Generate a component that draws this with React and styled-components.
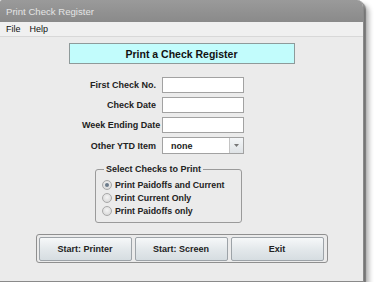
import React from 'react'
import styled, { createGlobalStyle } from 'styled-components'

const GlobalStyle = createGlobalStyle`
  body {
    margin: 0;
    background: #ffffff;
    font-family: "Liberation Sans", Arial, sans-serif;
  }
`

const Window = styled.div`
  width: 364px;
  height: 282px;
  display: flex;
  flex-direction: column;
  background: #ebebeb;
  border-radius: 2px 7px 0 0;
  box-shadow: 2px 2px 1px rgba(0, 0, 0, 0.35), 5px 5px 5px rgba(0, 0, 0, 0.3);
  border-right: 1px solid #8a8a8a;
  border-bottom: 1px solid #8a8a8a;
  box-sizing: border-box;
  overflow: hidden;
`

const TitleBar = styled.div`
  height: 22px;
  flex: none;
  display: flex;
  align-items: center;
  padding-left: 6px;
  background: linear-gradient(#9a9a9a, #8a8a8a);
  color: #e4e4e4;
  font-size: 9.6px;
`

const MenuBar = styled.div`
  height: 14px;
  flex: none;
  display: flex;
  align-items: center;
  gap: 9px;
  padding-left: 6px;
  background: #f0f0f0;
  border-bottom: 1px solid #d8d8d8;
  font-size: 9px;
  color: #111;
`

const Body = styled.div`
  flex: 1;
  display: flex;
  flex-direction: column;
`

const Heading = styled.div`
  align-self: center;
  margin-top: 6px;
  width: 224px;
  height: 19px;
  display: flex;
  align-items: center;
  justify-content: center;
  background: #c2fcfc;
  border: 1px solid #8e9a9a;
  font-size: 10.5px;
  font-weight: bold;
  color: #111;
`

const Form = styled.div`
  margin: 13px 0 0 82px;
  display: grid;
  grid-template-columns: 74px 82px;
  column-gap: 6px;
  row-gap: 4px;
  align-items: center;
`

const Label = styled.div`
  text-align: right;
  font-size: 9px;
  font-weight: bold;
  color: #222;
  white-space: nowrap;
`

const Field = styled.div`
  height: 14px;
  background: #fff;
  border: 1px solid #a2a2a2;
`

const Select = styled.div`
  height: 15px;
  display: flex;
  background: #fff;
  border: 1px solid #a2a2a2;
  font-size: 9px;
  font-weight: bold;
  color: #222;
`

const SelectValue = styled.div`
  flex: 1;
  display: flex;
  align-items: center;
  padding-left: 8px;
`

const SelectButton = styled.div`
  width: 13px;
  display: flex;
  align-items: center;
  justify-content: center;
  border-left: 1px solid #c4c4c4;
  background: linear-gradient(#f4f6f8, #dfe3e6);
`

const Group = styled.fieldset`
  margin: 10px 0 0 95px;
  width: 147px;
  height: 59px;
  padding: 6px 0 0 6px;
  box-sizing: border-box;
  border: 1px solid #9a9a9a;
  border-radius: 3px;
  display: flex;
  flex-direction: column;
  gap: 3px;
`

const Legend = styled.legend`
  padding: 0 2px;
  margin-left: 2px;
  font-size: 9px;
  font-weight: bold;
  color: #222;
`

const Option = styled.div`
  display: flex;
  align-items: center;
  gap: 3px;
  height: 10px;
  font-size: 8.8px;
  font-weight: bold;
  color: #222;
`

const Radio = styled.span`
  width: 8px;
  height: 8px;
  border-radius: 50%;
  border: 1px solid #a8a8a8;
  background: radial-gradient(circle at 50% 40%, #f4f4f4, #d2d2d2);
  display: flex;
  align-items: center;
  justify-content: center;

  &::after {
    content: '';
    width: 4px;
    height: 4px;
    border-radius: 50%;
    background: ${p => (p.checked ? '#6b7a8a' : 'transparent')};
  }
`

const ButtonPanel = styled.div`
  align-self: center;
  margin-top: 11px;
  width: 292px;
  height: 29px;
  box-sizing: border-box;
  padding: 2px 3px 0 2px;
  border: 1px solid #8f8f8f;
  border-radius: 3px;
  display: flex;
  gap: 3px;
`

const Button = styled.div`
  flex: 1;
  height: 22px;
  display: flex;
  align-items: center;
  justify-content: center;
  border: 1px solid #9da3a8;
  border-radius: 2px;
  background: linear-gradient(#f6f8f9, #e2e7ea 55%, #d6dde1);
  font-size: 9px;
  font-weight: bold;
  color: #222;
`

const Arrow = () => (
  <svg width="5" height="3" viewBox="0 0 5 3">
    <path d="M0 0 L5 0 L2.5 3 Z" fill="#777" />
  </svg>
)

const fields = ['First Check No.', 'Check Date', 'Week Ending Date']
const options = ['Print Paidoffs and Current', 'Print Current Only', 'Print Paidoffs only']

export default function App() {
  return (
    <>
      <GlobalStyle />
      <Window>
        <TitleBar>Print Check Register</TitleBar>
        <MenuBar>
          <span>File</span>
          <span>Help</span>
        </MenuBar>
        <Body>
          <Heading>Print a Check Register</Heading>
          <Form>
            {fields.map(f => (
              <React.Fragment key={f}>
                <Label>{f}</Label>
                <Field />
              </React.Fragment>
            ))}
            <Label>Other YTD Item</Label>
            <Select>
              <SelectValue>none</SelectValue>
              <SelectButton>
                <Arrow />
              </SelectButton>
            </Select>
          </Form>
          <Group>
            <Legend>Select Checks to Print</Legend>
            {options.map((o, i) => (
              <Option key={o}>
                <Radio checked={i === 0} />
                {o}
              </Option>
            ))}
          </Group>
          <ButtonPanel>
            <Button>Start: Printer</Button>
            <Button>Start: Screen</Button>
            <Button>Exit</Button>
          </ButtonPanel>
        </Body>
      </Window>
    </>
  )
}
